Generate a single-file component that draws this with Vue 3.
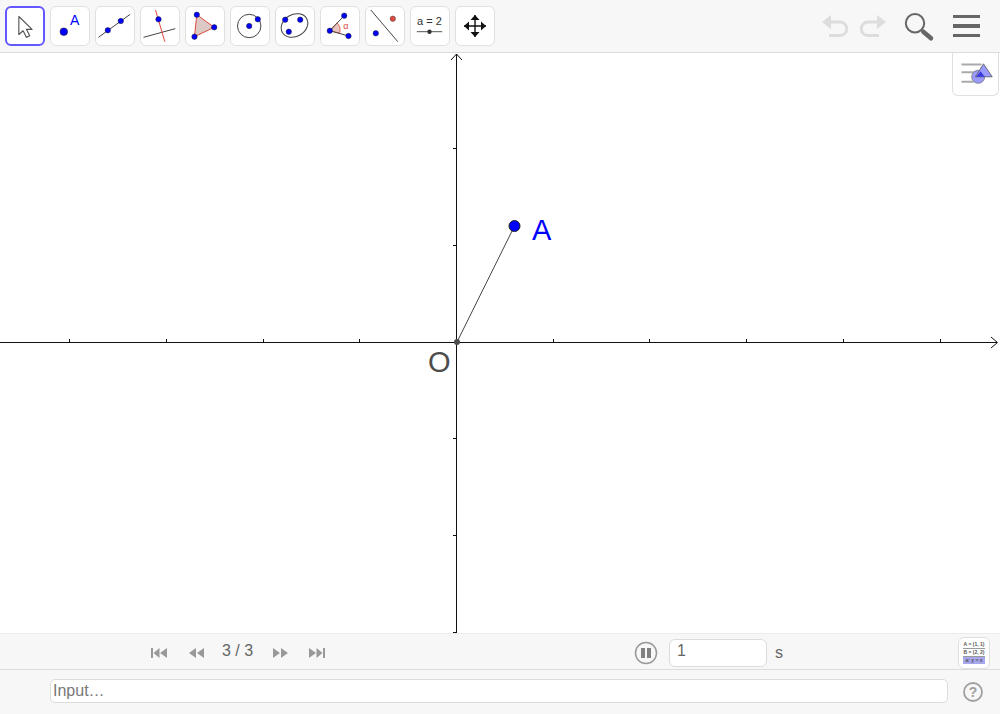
<template>
  <div class="app">
    <header class="toolbar">
      <div class="tools">
        <button v-for="(tool, i) in tools" :key="tool" class="tool" :class="{ active: i === 0 }" :title="tool">
          <svg width="38" height="38" viewBox="0 -0.5 38 38">
            <template v-if="tool === 'move'">
              <path d="M12.500 8.500v19l4.500-4 3.500 7 3.500-1.700-3.500-6.800h6z" fill="#fff" stroke="#555" stroke-width="1.200" stroke-linejoin="round" />
            </template>
            <template v-else-if="tool === 'point'">
              <circle cx="12.800" cy="24.200" r="3.800" fill="#0000ff" stroke="#222" stroke-width=".6" />
              <text x="19" y="17.500" class="tool-a">A</text>
            </template>
            <template v-else-if="tool === 'line'">
              <line x1="2.500" y1="29.800" x2="34.200" y2="6.800" stroke="#444" stroke-width="1" />
              <circle cx="11.800" cy="22.800" r="2.700" fill="#0000ff" stroke="#222" stroke-width=".5" />
              <circle cx="24.800" cy="13.500" r="2.700" fill="#0000ff" stroke="#222" stroke-width=".5" />
            </template>
            <template v-else-if="tool === 'perpendicular'">
              <line x1="2.500" y1="29.800" x2="34.200" y2="21.200" stroke="#444" stroke-width="1" />
              <line x1="14.500" y1="2.500" x2="23.800" y2="34.200" stroke="#e0483e" stroke-width="1" />
              <circle cx="17.500" cy="11.800" r="2.700" fill="#0000ff" stroke="#222" stroke-width=".5" />
            </template>
            <template v-else-if="tool === 'polygon'">
              <path d="M10.800 7.200 28.200 19.800 8.500 29.200z" fill="#dcc9c6" stroke="#e0483e" stroke-width="1" />
              <circle cx="10.800" cy="7.200" r="2.700" fill="#0000ff" stroke="#222" stroke-width=".5" />
              <circle cx="28.200" cy="19.800" r="2.700" fill="#0000ff" stroke="#222" stroke-width=".5" />
              <circle cx="8.500" cy="29.200" r="2.700" fill="#0000ff" stroke="#222" stroke-width=".5" />
            </template>
            <template v-else-if="tool === 'circle'">
              <circle cx="18.200" cy="18.500" r="11.700" fill="none" stroke="#444" stroke-width="1" />
              <circle cx="18.200" cy="18.500" r="2.700" fill="#0000ff" stroke="#222" stroke-width=".5" />
              <circle cx="26.800" cy="11.800" r="2.700" fill="#0000ff" stroke="#222" stroke-width=".5" />
            </template>
            <template v-else-if="tool === 'ellipse'">
              <ellipse cx="18.500" cy="18" rx="14" ry="11" transform="rotate(-30 18.500 18)" fill="none" stroke="#444" stroke-width="1" />
              <circle cx="9.200" cy="12.200" r="2.700" fill="#0000ff" stroke="#222" stroke-width=".5" />
              <circle cx="24.200" cy="12.200" r="2.700" fill="#0000ff" stroke="#222" stroke-width=".5" />
              <circle cx="12.800" cy="24.200" r="2.700" fill="#0000ff" stroke="#222" stroke-width=".5" />
            </template>
            <template v-else-if="tool === 'angle'">
              <path d="M8.800 23.200 16 15.400A10 10 0 0 1 18.500 25.700z" fill="#e8c6c0" stroke="#e0483e" stroke-width=".8" />
              <path d="M8.800 23.200 23.200 8.200M8.800 23.200 27.500 28.500" stroke="#444" stroke-width="1" fill="none" />
              <circle cx="23.200" cy="8.200" r="2.700" fill="#0000ff" stroke="#222" stroke-width=".5" />
              <circle cx="8.800" cy="23.200" r="2.700" fill="#0000ff" stroke="#222" stroke-width=".5" />
              <circle cx="27.500" cy="28.500" r="2.700" fill="#0000ff" stroke="#222" stroke-width=".5" />
              <text x="22.300" y="21" class="tool-alpha">α</text>
            </template>
            <template v-else-if="tool === 'reflect'">
              <line x1="4.800" y1="2.500" x2="31.800" y2="34.200" stroke="#444" stroke-width="1" />
              <circle cx="9.800" cy="25.800" r="2.700" fill="#0000ff" stroke="#222" stroke-width=".5" />
              <circle cx="26.800" cy="11.200" r="2.700" fill="#e0483e" stroke="#444" stroke-width=".5" />
            </template>
            <template v-else-if="tool === 'slider'">
              <text x="18.500" y="17.500" class="tool-slider">a = 2</text>
              <line x1="5.800" y1="24.200" x2="31.200" y2="24.200" stroke="#555" stroke-width="1" />
              <circle cx="18.500" cy="24.200" r="2.200" fill="#333" />
            </template>
            <template v-else>
              <path d="M19 7.500v22M8 18.500h22" stroke="#111" stroke-width="1.400" fill="none" />
              <path d="M19 7.500l-4.500 5h9zM19 29.500l-4.500-5h9zM8 18.500l5-4.500v9zM30 18.500l-5-4.500v9z" fill="#111" />
            </template>
          </svg>
        </button>
      </div>
      <div class="actions">
        <svg width="30" height="26" viewBox="0 0 30 26">
          <path d="M1 9 10 2v14z" fill="#ddd" />
          <path d="M9 9h10a6.500 6.500 0 0 1 0 13.500H8" fill="none" stroke="#ddd" stroke-width="3" />
        </svg>
        <svg width="30" height="26" viewBox="0 0 30 26" class="redo">
          <path d="M29 9 20 2v14z" fill="#ddd" />
          <path d="M21 9H11a6.500 6.500 0 0 0 0 13.500h11" fill="none" stroke="#ddd" stroke-width="3" />
        </svg>
        <svg width="32" height="32" viewBox="0 0 32 32" class="search">
          <circle cx="12" cy="13.300" r="9.200" fill="none" stroke="#666" stroke-width="2" />
          <line x1="20.300" y1="21.700" x2="28" y2="28.300" stroke="#666" stroke-width="4.500" stroke-linecap="round" />
        </svg>
        <div class="menu"><span></span><span></span><span></span></div>
      </div>
    </header>

    <main class="canvas">
      <svg class="graph" width="1000" height="580" viewBox="0 53 1000 580">
        <g stroke="#111" stroke-width="1" fill="none" shape-rendering="crispEdges">
          <line x1="0" y1="342.500" x2="997" y2="342.500" />
          <line x1="456.500" y1="54" x2="456.500" y2="633" />
          <line v-for="x in xTicks" :key="x" :x1="x + .5" y1="339" :x2="x + .5" y2="343" />
          <line v-for="y in yTicks" :key="y" x1="453" :y1="y + .5" x2="457" :y2="y + .5" />
        </g>
        <path d="M451 60 456.500 54 462 60M991 337 997.500 342.500 991 348" fill="none" stroke="#111" stroke-width="1" />
        <line x1="457" y1="342" x2="514.500" y2="226" stroke="#444" stroke-width="1" />
        <circle cx="457" cy="342" r="3" fill="#4d4d4d" />
        <circle cx="514.500" cy="226" r="5.500" fill="#0000ff" stroke="#222" stroke-width="1" />
        <text x="532" y="240" class="label-a">A</text>
        <text x="428" y="372" class="label-o">O</text>
      </svg>
      <button class="style-toggle" title="style">
        <svg width="34" height="26" viewBox="0 0 34 26">
          <path d="M2.500 3.500h20M2.500 11.200h15M2.500 20.800h12" stroke="#aaa" stroke-width="2" fill="none" />
          <circle cx="19.200" cy="15.800" r="6.500" fill="#9a9aff" stroke="#777" stroke-width=".8" />
          <path d="M24.500 2.800 33.200 15.800H16.500z" fill="#9a9aff" stroke="#555" stroke-width=".8" />
          <path d="M21.500 10.200 17.200 15.800H25.800z" fill="#3a3ae0" />
        </svg>
      </button>
    </main>

    <section class="playbar">
      <div class="steps">
        <button class="nav first">
          <svg width="18" height="12" viewBox="0 0 18 12"><path d="M1 1h2v10H1zM9.500 1v10L3.500 6zM17 1v10L10 6z" fill="#999" /></svg>
        </button>
        <button class="nav prev">
          <svg width="18" height="12" viewBox="0 0 18 12"><path d="M9 1v10L2 6zM17 1v10L10 6z" fill="#999" /></svg>
        </button>
        <span class="count">3 / 3</span>
        <button class="nav next">
          <svg width="18" height="12" viewBox="0 0 18 12"><path d="M1 1v10l7-5zM9 1v10l7-5z" fill="#999" /></svg>
        </button>
        <button class="nav last">
          <svg width="18" height="12" viewBox="0 0 18 12"><path d="M1 1v10l7-5zM8.500 1v10l6-5zM15 1h2v10h-2z" fill="#999" /></svg>
        </button>
      </div>
      <svg class="pause" width="24" height="24" viewBox="0 0 24 24">
        <circle cx="12" cy="12" r="10.500" fill="none" stroke="#999" stroke-width="1.500" />
        <path d="M7 7h4v10H7zM13 7h4v10h-4z" fill="#808080" />
      </svg>
      <input class="speed" value="1" />
      <span class="unit">s</span>
      <button class="algebra">
        <span class="alg-row">A = (1, 1)</span>
        <span class="alg-row">B = (2, 2)</span>
        <span class="alg-row hl">a: y = x</span>
      </button>
    </section>

    <footer class="inputbar">
      <input class="algebra-input" placeholder="Input…" />
      <svg class="help" width="22" height="22" viewBox="0 0 22 22">
        <circle cx="11" cy="11" r="9" fill="none" stroke="#a0a0a0" stroke-width="1.800" />
        <text x="11" y="15.500" class="help-mark">?</text>
      </svg>
    </footer>
  </div>
</template>

<script setup>
const tools = ['move', 'point', 'line', 'perpendicular', 'polygon', 'circle', 'ellipse', 'angle', 'reflect', 'slider', 'pan']

// grid spacing is about 96.8px around the origin
const xTicks = [69, 166, 263, 359, 553, 649, 746, 843, 940]
const yTicks = [148, 245, 438, 535, 632]
</script>

<style>
html, body {
  margin: 0;
  background: #fff;
}
</style>

<style scoped>
.app {
  width: 1000px;
  height: 714px;
  display: flex;
  flex-direction: column;
  overflow: hidden;
  font-family: "Liberation Sans", Arial, sans-serif;
  color: #666;
}

button {
  padding: 0;
  border: none;
  background: none;
}

.toolbar {
  height: 52px;
  flex: none;
  display: flex;
  align-items: flex-start;
  justify-content: space-between;
  background: #f7f7f7;
  border-bottom: 1px solid #dcdcdc;
}

.tools {
  display: flex;
  gap: 5px;
  padding: 6px 0 0 5px;
}

.tool {
  width: 40px;
  height: 40px;
  box-sizing: border-box;
  border: 1px solid #e0e0e0;
  border-radius: 6px;
  background: #fff;
  display: flex;
  align-items: center;
  justify-content: center;
}

.tool.active {
  border: 2px solid #6557ff;
}

.tool-a {
  font-size: 14px;
  fill: #0000ff;
}

.tool-alpha {
  font-size: 9px;
  fill: #e0483e;
}

.tool-slider {
  font-size: 11px;
  fill: #333;
  text-anchor: middle;
}

.actions {
  display: flex;
  align-items: center;
  height: 52px;
  padding-right: 20px;
}

.redo {
  margin-left: 6px;
}

.search {
  margin-left: 16px;
}

.menu {
  margin-left: 18px;
  width: 27px;
  display: flex;
  flex-direction: column;
  gap: 6px;
}

.menu span {
  height: 3.500px;
  background: #666;
}

.canvas {
  position: relative;
  height: 580px;
  flex: none;
  background: #fff;
}

.graph {
  display: block;
}

.label-a {
  font-size: 29px;
  fill: #0000ff;
}

.label-o {
  font-size: 29px;
  fill: #4d4d4d;
}

.style-toggle {
  position: absolute;
  top: 0;
  right: 1px;
  width: 47px;
  height: 43px;
  box-sizing: border-box;
  background: #fff;
  border: 1px solid #e0e0e0;
  border-top: none;
  border-radius: 0 0 6px 6px;
  display: flex;
  align-items: center;
  justify-content: center;
}

.playbar {
  height: 37px;
  flex: none;
  box-sizing: border-box;
  padding-top: 2px;
  display: flex;
  align-items: center;
  background: #f7f7f7;
  border-top: 1px solid #ececec;
  border-bottom: 1px solid #dcdcdc;
  position: relative;
}

.steps {
  display: flex;
  align-items: center;
  margin-left: 150px;
  width: 484px;
}

.nav {
  width: 18px;
  height: 12px;
  display: block;
  line-height: 0;
}

.prev {
  margin-left: 19px;
}

.count {
  margin: -3px 18px 0 17px;
  font-size: 16px;
  color: #666;
  width: 32px;
  white-space: nowrap;
}

.last {
  margin-left: 18px;
}

.pause {
  flex: none;
  margin-top: 1px;
}

.speed {
  width: 98px;
  height: 28px;
  box-sizing: border-box;
  margin-left: 11px;
  padding: 0 0 3px 7px;
  border: 1px solid #dcdcdc;
  border-radius: 6px;
  background: #fff;
  font: 16px "Liberation Sans", Arial, sans-serif;
  color: #666;
}

.unit {
  margin-left: 8px;
  font-size: 16px;
  color: #666;
}

.algebra {
  margin-left: auto;
  margin-right: 10px;
  width: 32px;
  height: 32px;
  box-sizing: border-box;
  border: 1px solid #e0e0e0;
  border-radius: 6px;
  background: #fff;
  display: flex;
  flex-direction: column;
  align-items: center;
  justify-content: center;
  overflow: hidden;
}

.alg-row {
  width: 22px;
  font-size: 5px;
  line-height: 7px;
  font-weight: bold;
  color: #555;
  text-align: center;
  white-space: nowrap;
  border-bottom: 1px solid #999;
}

.alg-row.hl {
  background: #a7a7ee;
  border-bottom: none;
}

.inputbar {
  flex: 1;
  display: flex;
  align-items: center;
  background: #f7f7f7;
  padding: 0 0 2px 50px;
}

.algebra-input {
  width: 898px;
  height: 24px;
  box-sizing: border-box;
  padding: 0 0 0 2px;
  border: 1px solid #dcdcdc;
  border-radius: 5px;
  background: #fff;
  font: 16px "Liberation Sans", Arial, sans-serif;
  color: #666;
}

.algebra-input::placeholder {
  color: #777;
  opacity: 1;
}

.help {
  margin-left: 14px;
  margin-top: 2px;
}

.help-mark {
  font-size: 14px;
  font-weight: bold;
  fill: #a0a0a0;
  text-anchor: middle;
}
</style>
